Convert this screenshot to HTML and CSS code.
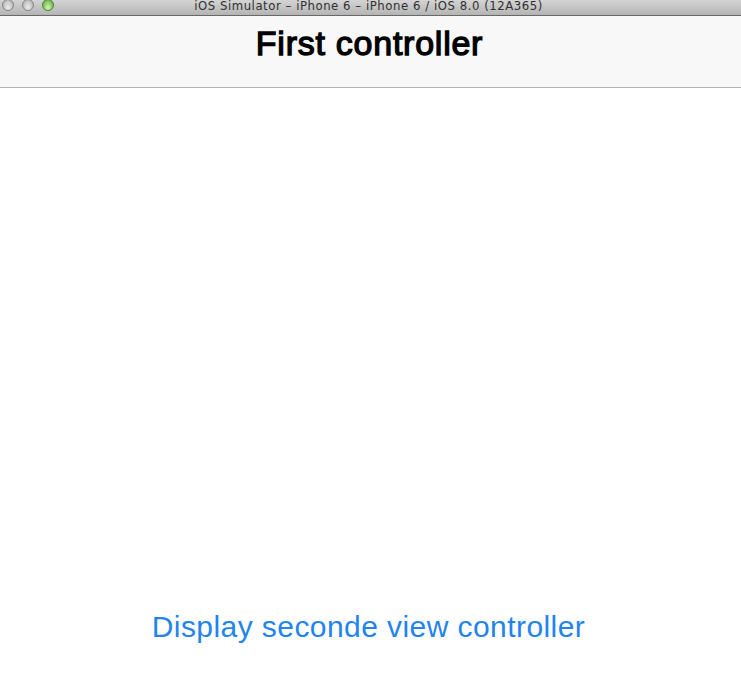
FILE: index.html
```html
<!DOCTYPE html>
<html lang="en">
<head>
<meta charset="utf-8">
<title>iOS Simulator</title>
<link rel="stylesheet" href="styles.css">
</head>
<body>
<div class="window">
  <header class="titlebar">
    <div class="lights">
      <span class="light"></span><span class="light"></span><span class="light light-green"></span>
    </div>
    <span class="window-title">iOS Simulator – iPhone 6 – iPhone 6 / iOS 8.0 (12A365)</span>
  </header>
  <nav class="navbar"><h1 class="nav-title">First controller</h1></nav>
  <main class="content"><button class="link">Display seconde view controller</button></main>
</div>
</body>
</html>
```

FILE: styles.css
```css
* { box-sizing: border-box; }
body { margin: 0; background: #fff; }
.window { height: 686px; display: flex; flex-direction: column; overflow: hidden; }
.titlebar {
  flex: none; height: 16px; display: grid; grid-template-columns: 60px 1fr 64px;
  background: linear-gradient(#d4d4d4, #b4b4b4); border-bottom: 1px solid #686868;
}
.lights { display: flex; gap: 8px; padding-left: 2px; }
.light {
  flex: none; width: 12px; height: 12px; margin-top: -1px; border-radius: 50%; border: 1px solid #858585;
  background: radial-gradient(ellipse at 50% 75%, #ececec, #c8c8c8 55%, #aaa);
}
.light-green { background: radial-gradient(ellipse at 50% 80%, #d2f9ac, #91cf6c 50%, #5f9a46); border-color: #4f7d3b; }
.window-title {
  justify-self: center; white-space: nowrap; color: #303030; letter-spacing: 0.54px;
  font: 13px/11px "DejaVu Sans Condensed", "DejaVu Sans", sans-serif; font-stretch: condensed;
}
.navbar {
  flex: none; height: 72px; background: #f8f8f8; border-bottom: 1px solid #b2b2b2;
  display: flex; justify-content: center; padding: 7px 2px 0 0;
}
.nav-title {
  margin: 0; color: #000; white-space: nowrap; letter-spacing: 0.75px;
  font: 400 34px/40px "Liberation Sans", Arial, sans-serif; -webkit-text-stroke: 1.3px #000;
}
.content { flex: 1; display: flex; justify-content: center; align-items: flex-end; padding: 0 4px 41px 0; }
.link {
  border: 0; padding: 0; background: none; color: #1f84ee; white-space: nowrap;
  font: 30px/36px "Liberation Sans", Arial, sans-serif; letter-spacing: 0.43px;
}
```
